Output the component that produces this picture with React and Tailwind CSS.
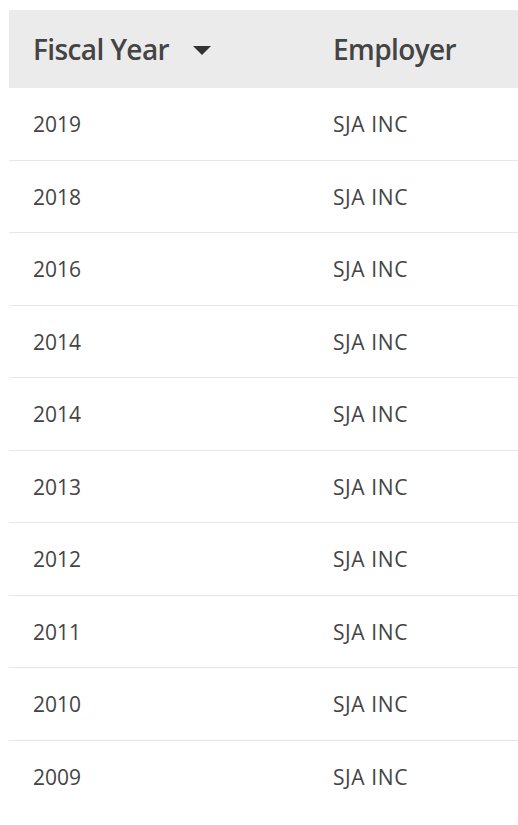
import React from "react";

const rows = ["2019", "2018", "2016", "2014", "2014", "2013", "2012", "2011", "2010", "2009"];

const App = () => {
  return (
    <div className="min-h-screen bg-white pt-[10px] pl-[9px] font-['Open_Sans',sans-serif] text-[#444]">
      <div className="w-[520px]">
        <div className="flex h-[78px] items-center bg-[#ebebeb] text-[28px] font-semibold tracking-[-0.6px]">
          <div className="flex w-[300px] items-center pl-[24px]">
            <span>Fiscal Year</span>
            <svg className="ml-[24px] mt-[2px]" width="18" height="9" viewBox="0 0 18 9">
              <path d="M0 0 L18 0 L9 9 Z" fill="#333" />
            </svg>
          </div>
          <div className="pl-[24px]">Employer</div>
        </div>
        {rows.map((year, i) => (
          <div
            key={i}
            className={`flex h-[72.5px] items-center pt-[2px] text-[21px] ${i < rows.length - 1 ? "border-b border-[#e6e6e6]" : ""}`}
          >
            <div className="w-[300px] pl-[24px]">{year}</div>
            <div className="pl-[24px] tracking-[0.6px]">SJA INC</div>
          </div>
        ))}
      </div>
    </div>
  );
};

export default App;
